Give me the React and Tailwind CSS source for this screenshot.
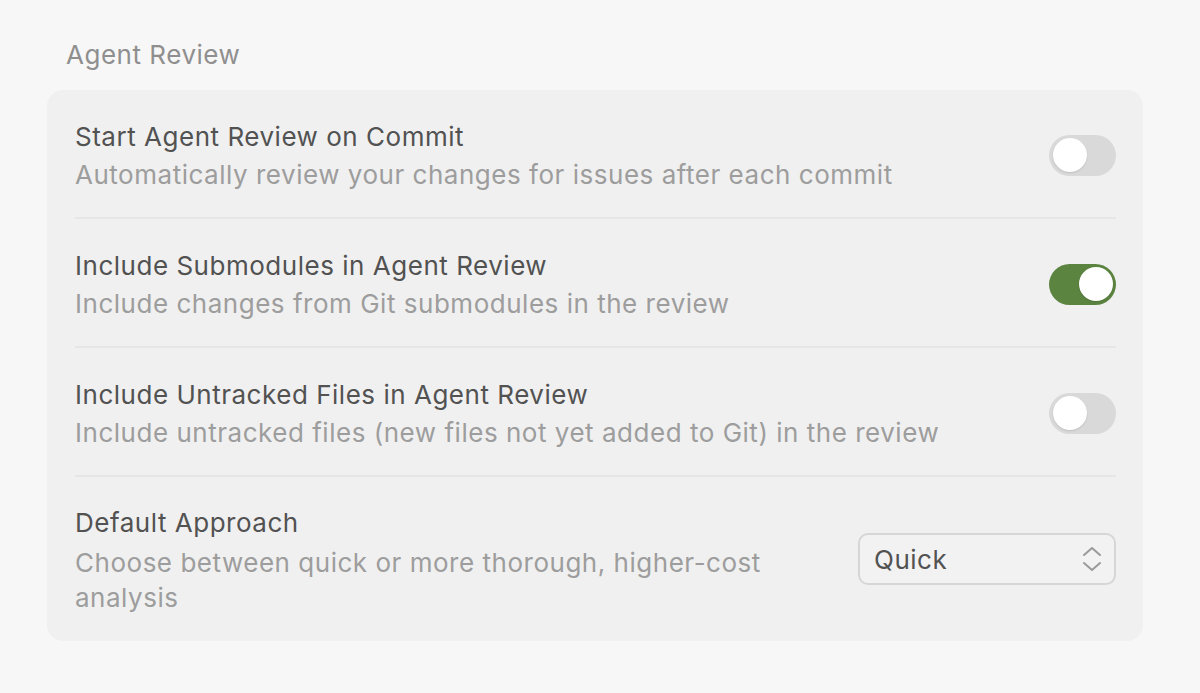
import { useState } from "react";

const FONT = { fontFamily: "Inter, 'Noto Sans', sans-serif" };

function Toggle({ on, onChange }) {
  return (
    <button
      onClick={onChange}
      className={
        "relative shrink-0 w-[67px] h-[41px] rounded-full transition-colors " +
        (on ? "bg-[#5c8441]" : "bg-[#d9d9d9]")
      }
    >
      <span
        className={
          "absolute top-[3.5px] w-[34px] h-[34px] rounded-full bg-white shadow-[0_1px_2px_rgba(0,0,0,0.12)] transition-all " +
          (on ? "left-[30px]" : "left-[3.5px]")
        }
      />
    </button>
  );
}

function Row({ title, desc, children }) {
  return (
    <div className="flex items-center gap-8 pt-[27px] pb-[24px] border-b-2 border-[#e6e6e6]">
      <div className="flex-1 min-w-0">
        <div className="text-[26px] tracking-[0.02em] leading-[39px] text-[#525252]">{title}</div>
        <div className="text-[26px] tracking-[0.02em] leading-[37px] text-[#9d9d9d]">{desc}</div>
      </div>
      {children}
    </div>
  );
}

export default function App() {
  const [toggles, setToggles] = useState({ commit: false, submodules: true, untracked: false });
  const flip = (k) => setToggles((t) => ({ ...t, [k]: !t[k] }));

  return (
    <div className="w-[1200px] h-[693px] bg-[#f7f7f7] pt-[38px] pl-[47px] pr-[57px]" style={FONT}>
      <h2 className="text-[26px] tracking-[0.02em] leading-[34px] text-[#8f8f8f] pl-[19px] mb-[18px]">
        Agent Review
      </h2>

      <div className="bg-[#f0f0f0] rounded-[16px] pl-[28px] pr-[27px]">
        <Row
          title="Start Agent Review on Commit"
          desc="Automatically review your changes for issues after each commit"
        >
          <Toggle on={toggles.commit} onChange={() => flip("commit")} />
        </Row>
        <Row
          title="Include Submodules in Agent Review"
          desc="Include changes from Git submodules in the review"
        >
          <Toggle on={toggles.submodules} onChange={() => flip("submodules")} />
        </Row>
        <Row
          title="Include Untracked Files in Agent Review"
          desc="Include untracked files (new files not yet added to Git) in the review"
        >
          <Toggle on={toggles.untracked} onChange={() => flip("untracked")} />
        </Row>
        <div className="flex items-center gap-8 pt-[26px] pb-[26px]">
          <div className="w-[720px]">
            <div className="text-[26px] tracking-[0.02em] leading-[39px] text-[#525252]">Default Approach</div>
            <div className="mt-[3px] text-[26px] tracking-[0.02em] leading-[35px] text-[#9d9d9d]">
              Choose between quick or more thorough, higher-cost analysis
            </div>
          </div>
          <div className="ml-auto w-[258px] h-[52px] rounded-[10px] border-2 border-[#d6d6d6] bg-[#f2f2f2] flex items-center justify-between pl-[14px] pr-[12px]">
            <span className="text-[26px] tracking-[0.02em] text-[#525252]">Quick</span>
            <svg width="20" height="28" viewBox="0 0 20 28" fill="none" stroke="#9a9a9a" strokeWidth="2" strokeLinecap="round" strokeLinejoin="round">
              <path d="M2 10 L10 3 L18 10" />
              <path d="M2 18 L10 25 L18 18" />
            </svg>
          </div>
        </div>
      </div>
    </div>
  );
}
